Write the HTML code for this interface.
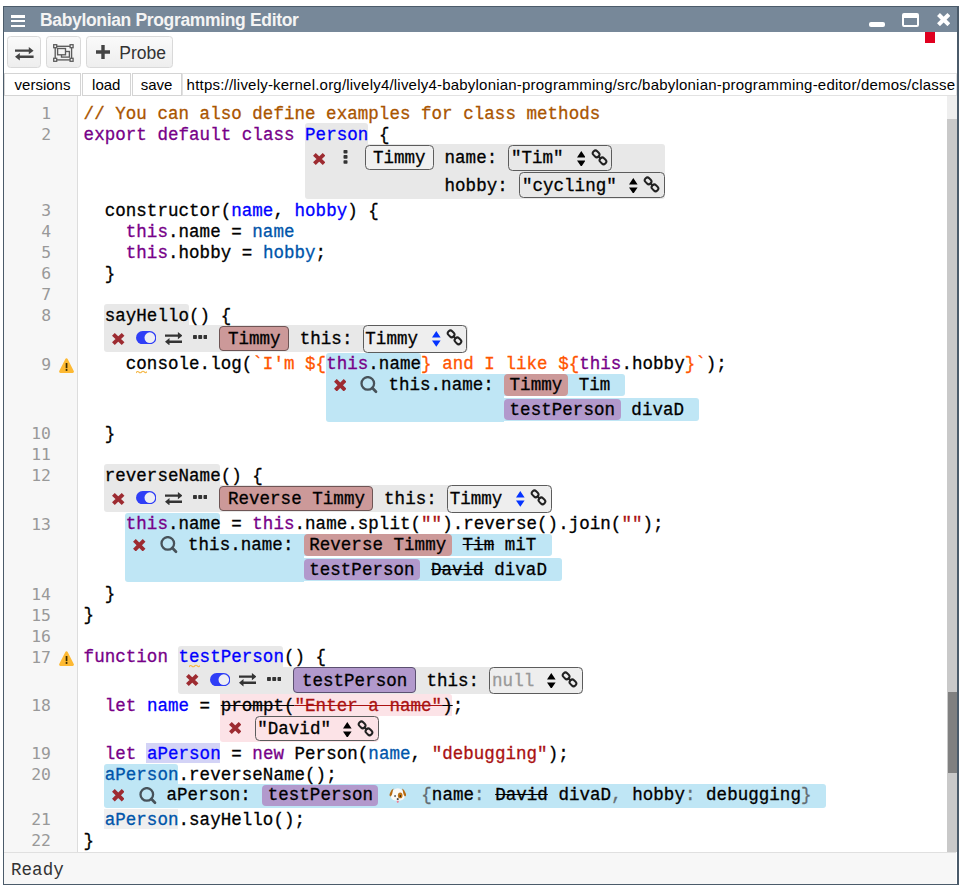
<!DOCTYPE html>
<html lang="en"><head><meta charset="utf-8"><title>Babylonian Programming Editor</title>
<style>
html,body{margin:0;padding:0;background:#fff;}
body{width:965px;height:894px;position:relative;overflow:hidden;font-family:"Liberation Sans",sans-serif;}
div{box-sizing:border-box;}
.m{position:absolute;white-space:pre;font-family:"Liberation Mono",monospace;font-size:17.5px;letter-spacing:0.043px;line-height:21px;height:21px;color:#000;-webkit-text-stroke:0.3px;}
.ln{position:absolute;left:4px;width:47px;text-align:right;white-space:pre;font-family:"DejaVu Sans Mono","Liberation Mono",monospace;font-size:16.4px;line-height:21px;height:21px;color:#999;}
.k{color:#708}.d{color:#00f}.v2{color:#05a}.s{color:#a11}.s2{color:#f50}.c{color:#a50}.g{color:#626c72}
.st{text-decoration:underline;text-decoration-thickness:1.2px;text-underline-offset:-5.6px;text-decoration-skip-ink:none;}
.btn{position:absolute;background:linear-gradient(#fafafa,#eee);border:1px solid #d9d9d9;border-radius:3.5px;}
.b2{position:absolute;top:73px;height:23px;background:#fff;border:1px solid #d4d4d4;font-size:15px;line-height:21px;text-align:center;color:#000;}
.chip{position:absolute;border-radius:4px;}
.ibox{position:absolute;border:1px solid #5c5c5c;border-radius:4.5px;}
</style></head><body>

<div style="position:absolute;left:3.00px;top:6.00px;width:956.00px;height:879.00px;background:#fff;border:1px solid #4b5b6a;border-right-width:2px;"></div>
<div style="position:absolute;left:4.00px;top:7.00px;width:953.00px;height:25.00px;background:#778899;"></div>
<div style="position:absolute;left:10.80px;top:15.20px;width:14.40px;height:2.40px;background:#fff;"></div>
<div style="position:absolute;left:10.80px;top:19.90px;width:14.40px;height:2.40px;background:#fff;"></div>
<div style="position:absolute;left:10.80px;top:24.60px;width:14.40px;height:2.40px;background:#fff;"></div>
<div style="position:absolute;left:40px;top:9.5px;font:bold 17.5px/21px 'Liberation Sans',sans-serif;color:#f4f4f4;white-space:pre;letter-spacing:-0.34px;">Babylonian Programming Editor</div>
<div style="position:absolute;left:868.60px;top:21.80px;width:16.80px;height:5.20px;background:#fff;border-radius:2px;"></div>
<div style="position:absolute;left:901.60px;top:12.80px;width:17.00px;height:14.30px;border:2.3px solid #fff;border-top-width:5.2px;border-radius:2px;"></div>
<svg style="position:absolute;left:936.80px;top:13.30px" width="13.4" height="13.2" viewBox="0 0 12 12" preserveAspectRatio="none"><path d="M1.35 1.35L10.65 10.65M10.65 1.35L1.35 10.65" stroke="#fff" stroke-width="3.7" fill="none"/></svg>
<div style="position:absolute;left:924.70px;top:32.00px;width:10.20px;height:10.80px;background:#e0001f;"></div>
<div class="btn" style="left:7.3px;top:35.6px;width:33.4px;height:32.8px;"></div>
<svg style="position:absolute;left:15.00px;top:47.40px" width="18.6" height="13.4" viewBox="0 0 17.4 13.4" preserveAspectRatio="none"><path d="M0 2.45H12.9V0L17.4 3.65L12.9 7.3V4.85H0ZM17.4 8.55H4.5V6.1L0 9.75L4.5 13.4V10.95H17.4Z" fill="#444"/></svg>
<div class="btn" style="left:46.3px;top:35.6px;width:34.4px;height:32.8px;"></div>
<svg style="position:absolute;left:53.20px;top:44.20px" width="20.8" height="18" viewBox="0 0 20.8 18"><g fill="none" stroke="#5c5c5c" stroke-width="1.35"><rect x="2.2" y="2.3" width="16.4" height="13.6"/><rect x="8.5" y="7.5" width="7.9" height="5.6"/><rect x="4.6" y="4.5" width="7.9" height="6.3" fill="#f4f4f4"/></g><g fill="#f6f6f6" stroke="#5c5c5c" stroke-width="1.3"><rect x=".7" y=".7" width="3" height="3"/><rect x="17.1" y=".7" width="3" height="3"/><rect x=".7" y="14.3" width="3" height="3"/><rect x="17.1" y="14.3" width="3" height="3"/></g></svg>
<div class="btn" style="left:86.2px;top:35.6px;width:86.4px;height:32.8px;"></div>
<svg style="position:absolute;left:96.00px;top:45.40px" width="14" height="14" viewBox="0 0 14 14"><path d="M5.3 0H8.7V5.3H14V8.7H8.7V14H5.3V8.7H0V5.3H5.3Z" fill="#444"/></svg>
<div style="position:absolute;left:119.3px;top:42.5px;font:17.5px/21px 'Liberation Sans',sans-serif;color:#333;white-space:pre;">Probe</div>
<div class="b2" style="left:4px;width:77px;">versions</div>
<div class="b2" style="left:81.5px;width:49.5px;">load</div>
<div class="b2" style="left:131.5px;width:50px;">save</div>
<div style="position:absolute;left:182px;top:73px;width:775px;height:23px;border:1px solid #e2e2e2;background:#fff;"><div style="position:absolute;left:0;top:0;width:771.5px;height:21px;overflow:hidden;"><div style="position:absolute;left:3.6px;top:0px;font:15px/21px &quot;Liberation Sans&quot;,sans-serif;color:#000;white-space:pre;letter-spacing:0.21px;">https://lively-kernel.org/lively4/lively4-babylonian-programming/src/babylonian-programming-editor/demos/classes.js</div></div></div>
<div style="position:absolute;left:4.00px;top:96.00px;width:74.00px;height:756.00px;background:#f7f7f7;border-right:1px solid #ddd;"></div>
<div style="position:absolute;left:947.00px;top:96.00px;width:10.00px;height:756.00px;background:#eeeeee;"></div>
<div style="position:absolute;left:947.30px;top:119.30px;width:9.50px;height:732.70px;background:#c9c9c9;"></div>
<div style="position:absolute;left:947.60px;top:692.00px;width:9.20px;height:80.50px;background:#808080;"></div>
<div style="position:absolute;left:4.00px;top:852.00px;width:952.00px;height:32.00px;background:#f7f7f7;border-top:1px solid #e0e0e0;"></div>
<div class="m" style="left:11.00px;top:859.53px;color:#333;-webkit-text-stroke:0;">Ready</div>
<div style="position:absolute;left:304.50px;top:122.70px;width:63.50px;height:22.30px;background:#e8e8e8;border-radius:3px 3px 0 0;"></div>
<div style="position:absolute;left:304.50px;top:143.60px;width:360.80px;height:55.20px;background:#e8e8e8;border-radius:0 3px 3px 3px;"></div>
<svg style="position:absolute;left:312.70px;top:152.60px" width="12.5" height="12" viewBox="0 0 12 12" preserveAspectRatio="none"><path d="M1.35 1.35L10.65 10.65M10.65 1.35L1.35 10.65" stroke="#9d2b31" stroke-width="3.7" fill="none"/></svg>
<svg style="position:absolute;left:342.60px;top:150.00px" width="5" height="13.8" viewBox="0 0 5 13.8"><rect x=".5" y="0" width="4" height="3.6" rx=".8" fill="#333"/><rect x=".5" y="5.1" width="4" height="3.6" rx=".8" fill="#333"/><rect x=".5" y="10.2" width="4" height="3.6" rx=".8" fill="#333"/></svg>
<div class="ibox" style="position:absolute;left:365.00px;top:144.50px;width:69.00px;height:25.20px;background:#f0f0f0;"></div>
<div class="m" style="left:372.90px;top:148.03px;">Timmy</div>
<div class="m" style="left:444.50px;top:148.03px;">name:</div>
<div class="ibox" style="position:absolute;left:508.30px;top:144.60px;width:103.90px;height:26.00px;background:transparent;"></div>
<div class="m" style="left:510.90px;top:148.03px;color:#000;">"Tim"</div>
<svg style="position:absolute;left:576.80px;top:150.50px" width="8.6" height="15.8" viewBox="0 0 8.6 15.8"><path d="M0 6.4L4.3 0L8.6 6.4ZM0 9.4L4.3 15.8L8.6 9.4Z" fill="#000"/></svg>
<svg style="position:absolute;left:590.80px;top:148.60px" width="18.5" height="17.5" viewBox="0 0 18.5 17.5"><g fill="none" stroke="#222" stroke-width="2"><rect x="-3.5" y="-2.6" width="7" height="5.2" rx="2.4" transform="translate(5.1 4.85) rotate(45)"/><rect x="-3.5" y="-2.6" width="7" height="5.2" rx="2.4" transform="translate(11.95 11.85) rotate(45)"/><path d="M6.9 6.7L10.1 9.9" stroke-width="2.1"/></g></svg>
<div class="m" style="left:444.50px;top:175.63px;">hobby:</div>
<div class="ibox" style="position:absolute;left:519.30px;top:171.60px;width:145.50px;height:26.40px;background:transparent;"></div>
<div class="m" style="left:521.90px;top:175.63px;color:#000;">"cycling"</div>
<svg style="position:absolute;left:629.40px;top:177.50px" width="8.6" height="15.8" viewBox="0 0 8.6 15.8"><path d="M0 6.4L4.3 0L8.6 6.4ZM0 9.4L4.3 15.8L8.6 9.4Z" fill="#000"/></svg>
<svg style="position:absolute;left:643.40px;top:175.60px" width="18.5" height="17.5" viewBox="0 0 18.5 17.5"><g fill="none" stroke="#222" stroke-width="2"><rect x="-3.5" y="-2.6" width="7" height="5.2" rx="2.4" transform="translate(5.1 4.85) rotate(45)"/><rect x="-3.5" y="-2.6" width="7" height="5.2" rx="2.4" transform="translate(11.95 11.85) rotate(45)"/><path d="M6.9 6.7L10.1 9.9" stroke-width="2.1"/></g></svg>
<div style="position:absolute;left:104.30px;top:304.20px;width:84.50px;height:21.80px;background:#e8e8e8;border-radius:3px 3px 0 0;"></div>
<div style="position:absolute;left:104.30px;top:325.00px;width:363.64px;height:27.40px;background:#e8e8e8;border-radius:0 4px 4px 3px;"></div>
<svg style="position:absolute;left:112.20px;top:332.90px" width="12.5" height="12" viewBox="0 0 12 12" preserveAspectRatio="none"><path d="M1.35 1.35L10.65 10.65M10.65 1.35L1.35 10.65" stroke="#9d2b31" stroke-width="3.7" fill="none"/></svg>
<svg style="position:absolute;left:135.90px;top:331.00px" width="20.4" height="13.3" viewBox="0 0 20.4 13.3"><rect x="0" y="0" width="20.4" height="13.3" rx="6.65" fill="#2f3ef6"/><circle cx="13.8" cy="6.65" r="5.3" fill="#eeeef4"/></svg>
<svg style="position:absolute;left:165.00px;top:331.75px" width="17.4" height="13.4" viewBox="0 0 17.4 13.4" preserveAspectRatio="none"><path d="M0 2.45H12.9V0L17.4 3.65L12.9 7.3V4.85H0ZM17.4 8.55H4.5V6.1L0 9.75L4.5 13.4V10.95H17.4Z" fill="#333"/></svg>
<svg style="position:absolute;left:192.90px;top:335.20px" width="14.4" height="3.9" viewBox="0 0 14.4 3.9"><rect x="0" y="0" width="3.9" height="3.9" rx=".7" fill="#333"/><rect x="5.25" y="0" width="3.9" height="3.9" rx=".7" fill="#333"/><rect x="10.5" y="0" width="3.9" height="3.9" rx=".7" fill="#333"/></svg>
<div class="chip" style="position:absolute;left:219.40px;top:325.50px;width:69.71px;height:25.90px;background:#cc9999;border:1px solid #6e5555;"></div>
<div class="m" style="left:227.90px;top:329.33px;">Timmy</div>
<div class="m" style="left:299.71px;top:329.33px;">this:</div>
<div class="ibox" style="position:absolute;left:362.73px;top:325.30px;width:104.71px;height:27.50px;background:#eeeeee;"></div>
<div class="m" style="left:365.33px;top:329.33px;color:#000;">Timmy</div>
<svg style="position:absolute;left:432.04px;top:331.20px" width="8.6" height="15.8" viewBox="0 0 8.6 15.8"><path d="M0 6.4L4.3 0L8.6 6.4ZM0 9.4L4.3 15.8L8.6 9.4Z" fill="#0433ff"/></svg>
<svg style="position:absolute;left:446.04px;top:329.30px" width="18.5" height="17.5" viewBox="0 0 18.5 17.5"><g fill="none" stroke="#222" stroke-width="2"><rect x="-3.5" y="-2.6" width="7" height="5.2" rx="2.4" transform="translate(5.1 4.85) rotate(45)"/><rect x="-3.5" y="-2.6" width="7" height="5.2" rx="2.4" transform="translate(11.95 11.85) rotate(45)"/><path d="M6.9 6.7L10.1 9.9" stroke-width="2.1"/></g></svg>
<div style="position:absolute;left:104.30px;top:464.20px;width:115.50px;height:21.80px;background:#e8e8e8;border-radius:3px 3px 0 0;"></div>
<div style="position:absolute;left:104.30px;top:485.00px;width:447.99px;height:27.40px;background:#e8e8e8;border-radius:0 4px 4px 3px;"></div>
<svg style="position:absolute;left:112.20px;top:492.90px" width="12.5" height="12" viewBox="0 0 12 12" preserveAspectRatio="none"><path d="M1.35 1.35L10.65 10.65M10.65 1.35L1.35 10.65" stroke="#9d2b31" stroke-width="3.7" fill="none"/></svg>
<svg style="position:absolute;left:135.90px;top:491.00px" width="20.4" height="13.3" viewBox="0 0 20.4 13.3"><rect x="0" y="0" width="20.4" height="13.3" rx="6.65" fill="#2f3ef6"/><circle cx="13.8" cy="6.65" r="5.3" fill="#eeeef4"/></svg>
<svg style="position:absolute;left:165.00px;top:491.75px" width="17.4" height="13.4" viewBox="0 0 17.4 13.4" preserveAspectRatio="none"><path d="M0 2.45H12.9V0L17.4 3.65L12.9 7.3V4.85H0ZM17.4 8.55H4.5V6.1L0 9.75L4.5 13.4V10.95H17.4Z" fill="#333"/></svg>
<svg style="position:absolute;left:192.90px;top:495.20px" width="14.4" height="3.9" viewBox="0 0 14.4 3.9"><rect x="0" y="0" width="3.9" height="3.9" rx=".7" fill="#333"/><rect x="5.25" y="0" width="3.9" height="3.9" rx=".7" fill="#333"/><rect x="10.5" y="0" width="3.9" height="3.9" rx=".7" fill="#333"/></svg>
<div class="chip" style="position:absolute;left:219.40px;top:485.50px;width:154.06px;height:25.90px;background:#cc9999;border:1px solid #6e5555;"></div>
<div class="m" style="left:227.90px;top:489.33px;">Reverse Timmy</div>
<div class="m" style="left:384.06px;top:489.33px;">this:</div>
<div class="ibox" style="position:absolute;left:447.07px;top:485.30px;width:104.72px;height:27.50px;background:#eeeeee;"></div>
<div class="m" style="left:449.67px;top:489.33px;color:#000;">Timmy</div>
<svg style="position:absolute;left:516.39px;top:491.20px" width="8.6" height="15.8" viewBox="0 0 8.6 15.8"><path d="M0 6.4L4.3 0L8.6 6.4ZM0 9.4L4.3 15.8L8.6 9.4Z" fill="#0433ff"/></svg>
<svg style="position:absolute;left:530.39px;top:489.30px" width="18.5" height="17.5" viewBox="0 0 18.5 17.5"><g fill="none" stroke="#222" stroke-width="2"><rect x="-3.5" y="-2.6" width="7" height="5.2" rx="2.4" transform="translate(5.1 4.85) rotate(45)"/><rect x="-3.5" y="-2.6" width="7" height="5.2" rx="2.4" transform="translate(11.95 11.85) rotate(45)"/><path d="M6.9 6.7L10.1 9.9" stroke-width="2.1"/></g></svg>
<div style="position:absolute;left:178.30px;top:645.70px;width:105.00px;height:21.80px;background:#e8e8e8;border-radius:3px 3px 0 0;"></div>
<div style="position:absolute;left:178.30px;top:666.50px;width:404.82px;height:27.40px;background:#e8e8e8;border-radius:0 4px 4px 3px;"></div>
<svg style="position:absolute;left:186.20px;top:674.40px" width="12.5" height="12" viewBox="0 0 12 12" preserveAspectRatio="none"><path d="M1.35 1.35L10.65 10.65M10.65 1.35L1.35 10.65" stroke="#9d2b31" stroke-width="3.7" fill="none"/></svg>
<svg style="position:absolute;left:209.90px;top:672.50px" width="20.4" height="13.3" viewBox="0 0 20.4 13.3"><rect x="0" y="0" width="20.4" height="13.3" rx="6.65" fill="#2f3ef6"/><circle cx="13.8" cy="6.65" r="5.3" fill="#eeeef4"/></svg>
<svg style="position:absolute;left:239.00px;top:673.25px" width="17.4" height="13.4" viewBox="0 0 17.4 13.4" preserveAspectRatio="none"><path d="M0 2.45H12.9V0L17.4 3.65L12.9 7.3V4.85H0ZM17.4 8.55H4.5V6.1L0 9.75L4.5 13.4V10.95H17.4Z" fill="#333"/></svg>
<svg style="position:absolute;left:266.90px;top:676.70px" width="14.4" height="3.9" viewBox="0 0 14.4 3.9"><rect x="0" y="0" width="3.9" height="3.9" rx=".7" fill="#333"/><rect x="5.25" y="0" width="3.9" height="3.9" rx=".7" fill="#333"/><rect x="10.5" y="0" width="3.9" height="3.9" rx=".7" fill="#333"/></svg>
<div class="chip" style="position:absolute;left:293.40px;top:667.00px;width:122.43px;height:25.90px;background:#b299cc;border:1px solid #5c5070;"></div>
<div class="m" style="left:301.90px;top:670.83px;">testPerson</div>
<div class="m" style="left:426.43px;top:670.83px;">this:</div>
<div class="ibox" style="position:absolute;left:489.44px;top:666.80px;width:93.17px;height:27.50px;background:#eeeeee;"></div>
<div class="m" style="left:492.05px;top:670.83px;color:#999;">null</div>
<svg style="position:absolute;left:547.22px;top:672.70px" width="8.6" height="15.8" viewBox="0 0 8.6 15.8"><path d="M0 6.4L4.3 0L8.6 6.4ZM0 9.4L4.3 15.8L8.6 9.4Z" fill="#000"/></svg>
<svg style="position:absolute;left:561.22px;top:670.80px" width="18.5" height="17.5" viewBox="0 0 18.5 17.5"><g fill="none" stroke="#222" stroke-width="2"><rect x="-3.5" y="-2.6" width="7" height="5.2" rx="2.4" transform="translate(5.1 4.85) rotate(45)"/><rect x="-3.5" y="-2.6" width="7" height="5.2" rx="2.4" transform="translate(11.95 11.85) rotate(45)"/><path d="M6.9 6.7L10.1 9.9" stroke-width="2.1"/></g></svg>
<div style="position:absolute;left:325.80px;top:353.30px;width:94.80px;height:21.20px;background:#bfe6f5;border-radius:3px 3px 0 0;"></div>
<div style="position:absolute;left:325.80px;top:373.50px;width:178.17px;height:48.40px;background:#bfe6f5;border-radius:0 0 0 3px;"></div>
<svg style="position:absolute;left:333.80px;top:378.50px" width="12.5" height="12.5" viewBox="0 0 12 12" preserveAspectRatio="none"><path d="M1.35 1.35L10.65 10.65M10.65 1.35L1.35 10.65" stroke="#9d2b31" stroke-width="3.7" fill="none"/></svg>
<svg style="position:absolute;left:360.40px;top:376.20px" width="18" height="18" viewBox="0 0 18 18"><circle cx="7.8" cy="7.4" r="6.3" fill="none" stroke="#47525a" stroke-width="2.3"/><path d="M12.4 12L16 15.7" stroke="#47525a" stroke-width="2.7" stroke-linecap="round"/></svg>
<div class="m" style="left:388.40px;top:375.33px;">this.name:</div>
<div style="position:absolute;left:503.47px;top:373.80px;width:121.93px;height:22.70px;background:#bfe6f5;border-radius:0 3px 3px 0;"></div>
<div class="chip" style="position:absolute;left:503.97px;top:374.40px;width:64.12px;height:21.50px;background:#cc9999;"></div>
<div class="m" style="left:509.57px;top:375.33px;">Timmy</div>
<div class="m" style="left:578.63px;top:375.33px;">Tim</div>
<div style="position:absolute;left:503.47px;top:398.00px;width:195.73px;height:22.70px;background:#bfe6f5;border-radius:0 3px 3px 0;"></div>
<div class="chip" style="position:absolute;left:503.97px;top:398.60px;width:116.83px;height:21.50px;background:#b299cc;"></div>
<div class="m" style="left:509.57px;top:399.53px;">testPerson</div>
<div class="m" style="left:631.35px;top:399.53px;">divaD</div>
<div style="position:absolute;left:125.40px;top:513.30px;width:94.30px;height:21.20px;background:#bfe6f5;border-radius:3px 3px 0 0;"></div>
<div style="position:absolute;left:125.40px;top:533.50px;width:178.17px;height:48.40px;background:#bfe6f5;border-radius:0 0 0 3px;"></div>
<svg style="position:absolute;left:133.40px;top:538.50px" width="12.5" height="12.5" viewBox="0 0 12 12" preserveAspectRatio="none"><path d="M1.35 1.35L10.65 10.65M10.65 1.35L1.35 10.65" stroke="#9d2b31" stroke-width="3.7" fill="none"/></svg>
<svg style="position:absolute;left:160.00px;top:536.20px" width="18" height="18" viewBox="0 0 18 18"><circle cx="7.8" cy="7.4" r="6.3" fill="none" stroke="#47525a" stroke-width="2.3"/><path d="M12.4 12L16 15.7" stroke="#47525a" stroke-width="2.7" stroke-linecap="round"/></svg>
<div class="m" style="left:188.00px;top:535.33px;">this.name:</div>
<div style="position:absolute;left:303.07px;top:533.80px;width:248.45px;height:22.70px;background:#bfe6f5;border-radius:0 3px 3px 0;"></div>
<div class="chip" style="position:absolute;left:303.57px;top:534.40px;width:148.46px;height:21.50px;background:#cc9999;"></div>
<div class="m" style="left:309.17px;top:535.33px;">Reverse Timmy</div>
<div class="m" style="left:462.57px;top:535.33px;"><span class="st">Tim</span> miT</div>
<div style="position:absolute;left:303.07px;top:558.00px;width:258.99px;height:22.70px;background:#bfe6f5;border-radius:0 3px 3px 0;"></div>
<div class="chip" style="position:absolute;left:303.57px;top:558.60px;width:116.83px;height:21.50px;background:#b299cc;"></div>
<div class="m" style="left:309.17px;top:559.53px;">testPerson</div>
<div class="m" style="left:430.95px;top:559.53px;"><span class="st">David</span> divaD</div>
<div style="position:absolute;left:220.30px;top:694.40px;width:231.60px;height:21.60px;background:#fce3e7;border-radius:0 3px 0 0;"></div>
<div style="position:absolute;left:220.30px;top:715.00px;width:159.10px;height:26.80px;background:#fce3e7;border-radius:0 4px 4px 3px;"></div>
<svg style="position:absolute;left:228.80px;top:722.30px" width="12.5" height="12" viewBox="0 0 12 12" preserveAspectRatio="none"><path d="M1.35 1.35L10.65 10.65M10.65 1.35L1.35 10.65" stroke="#9d2b31" stroke-width="3.7" fill="none"/></svg>
<div class="ibox" style="position:absolute;left:254.60px;top:715.80px;width:124.00px;height:25.70px;background:transparent;"></div>
<div class="m" style="left:257.20px;top:719.43px;color:#000;">"David"</div>
<svg style="position:absolute;left:343.20px;top:721.70px" width="8.6" height="15.8" viewBox="0 0 8.6 15.8"><path d="M0 6.4L4.3 0L8.6 6.4ZM0 9.4L4.3 15.8L8.6 9.4Z" fill="#000"/></svg>
<svg style="position:absolute;left:357.20px;top:719.80px" width="18.5" height="17.5" viewBox="0 0 18.5 17.5"><g fill="none" stroke="#222" stroke-width="2"><rect x="-3.5" y="-2.6" width="7" height="5.2" rx="2.4" transform="translate(5.1 4.85) rotate(45)"/><rect x="-3.5" y="-2.6" width="7" height="5.2" rx="2.4" transform="translate(11.95 11.85) rotate(45)"/><path d="M6.9 6.7L10.1 9.9" stroke-width="2.1"/></g></svg>
<div style="position:absolute;left:146.30px;top:743.20px;width:73.70px;height:20.00px;background:#d3d3f6;border-radius:0;"></div>
<div style="position:absolute;left:103.90px;top:809.40px;width:73.90px;height:20.10px;background:#efefef;border-radius:0;"></div>
<div style="position:absolute;left:103.90px;top:764.00px;width:73.90px;height:21.00px;background:#bfe6f5;border-radius:3px 3px 0 0;"></div>
<div style="position:absolute;left:103.90px;top:784.00px;width:722.40px;height:23.80px;background:#bfe6f5;border-radius:0 3px 3px 3px;"></div>
<svg style="position:absolute;left:111.90px;top:789.00px" width="12.5" height="12.5" viewBox="0 0 12 12" preserveAspectRatio="none"><path d="M1.35 1.35L10.65 10.65M10.65 1.35L1.35 10.65" stroke="#9d2b31" stroke-width="3.7" fill="none"/></svg>
<svg style="position:absolute;left:138.50px;top:786.70px" width="18" height="18" viewBox="0 0 18 18"><circle cx="7.8" cy="7.4" r="6.3" fill="none" stroke="#47525a" stroke-width="2.3"/><path d="M12.4 12L16 15.7" stroke="#47525a" stroke-width="2.7" stroke-linecap="round"/></svg>
<div class="m" style="left:166.50px;top:785.43px;">aPerson:</div>
<div class="chip" style="position:absolute;left:262.40px;top:784.80px;width:115.40px;height:21.40px;background:#b299cc;"></div>
<div class="m" style="left:267.70px;top:785.43px;">testPerson</div>
<svg style="position:absolute;left:389.30px;top:787.80px" width="17.6" height="15.2" viewBox="0 0 17.6 15.2"><ellipse cx="8.75" cy="13.6" rx="1" ry="1.4" fill="#ee7f95"/><path d="M4.2 2.2Q8.75 -1.6 13.3 2.2Q16.4 6.5 15.3 10Q13.4 12.9 8.75 12.6Q4.1 12.9 2.2 10Q1.1 6.5 4.2 2.2Z" fill="#fbf9f6"/><path d="M4.6 .5Q2.4 1.3 .9 5.2Q-.1 8 1.6 8.4Q3 7.6 3.4 5Q3.7 2.6 4.6 .5Z" fill="#b9690f"/><path d="M13 .5Q15.2 1.3 16.7 5.2Q17.7 8 16 8.4Q14.6 7.6 14.2 5Q13.9 2.6 13 .5Z" fill="#b9690f"/><ellipse cx="11.2" cy="7.4" rx="2.3" ry="2.9" fill="#bf7215"/><ellipse cx="6.05" cy="8.1" rx=".65" ry="1.05" fill="#1a1a1a"/><ellipse cx="11.3" cy="8.1" rx=".65" ry="1.05" fill="#1a1a1a"/><ellipse cx="8.75" cy="11" rx="1.05" ry=".85" fill="#111"/></svg>
<div class="m" style="left:421.30px;top:785.43px;"><span class="g">{</span>name<span class="g">:</span> <span class="st">David</span> divaD<span class="g">,</span> hobby<span class="g">:</span> debugging<span class="g">}</span></div>
<svg style="position:absolute;left:135.50px;top:370.30px" width="11" height="4" viewBox="0 0 11 4"><path d="M0 3Q1.4 .5 2.8 2T5.6 2T8.4 2T11 1.5" fill="none" stroke="#f5b94a" stroke-width="1.1"/></svg>
<svg style="position:absolute;left:188.50px;top:663.60px" width="11" height="4" viewBox="0 0 11 4"><path d="M0 3Q1.4 .5 2.8 2T5.6 2T8.4 2T11 1.5" fill="none" stroke="#f5b94a" stroke-width="1.1"/></svg>
<div class="ln" style="top:103.20px;">1</div>
<div class="m" style="left:83.60px;top:103.63px;"><span class="c">// You can also define examples for class methods</span></div>
<div class="ln" style="top:124.20px;">2</div>
<div class="m" style="left:83.60px;top:124.63px;"><span class="k">export</span> <span class="k">default</span> <span class="k">class</span> <span class="d">Person</span> {</div>
<div class="ln" style="top:200.20px;">3</div>
<div class="m" style="left:83.60px;top:200.63px;">  constructor(<span class="d">name</span>, <span class="d">hobby</span>) {</div>
<div class="ln" style="top:221.20px;">4</div>
<div class="m" style="left:83.60px;top:221.63px;">    <span class="k">this</span>.name = <span class="v2">name</span></div>
<div class="ln" style="top:242.20px;">5</div>
<div class="m" style="left:83.60px;top:242.63px;">    <span class="k">this</span>.hobby = <span class="v2">hobby</span>;</div>
<div class="ln" style="top:263.20px;">6</div>
<div class="m" style="left:83.60px;top:263.63px;">  }</div>
<div class="ln" style="top:284.20px;">7</div>
<div class="ln" style="top:305.20px;">8</div>
<div class="m" style="left:83.60px;top:305.63px;">  sayHello() {</div>
<div class="ln" style="top:353.70px;">9</div>
<div class="m" style="left:83.60px;top:354.13px;">    console.log(<span class="s2">`I'm ${</span><span class="k">this</span>.name<span class="s2">} and I like ${</span><span class="k">this</span>.hobby<span class="s2">}`</span>);</div>
<div class="ln" style="top:423.20px;">10</div>
<div class="m" style="left:83.60px;top:423.63px;">  }</div>
<div class="ln" style="top:444.20px;">11</div>
<div class="ln" style="top:465.20px;">12</div>
<div class="m" style="left:83.60px;top:465.63px;">  reverseName() {</div>
<div class="ln" style="top:513.70px;">13</div>
<div class="m" style="left:83.60px;top:514.13px;">    <span class="k">this</span>.name = <span class="k">this</span>.name.split(<span class="s">""</span>).reverse().join(<span class="s">""</span>);</div>
<div class="ln" style="top:583.70px;">14</div>
<div class="m" style="left:83.60px;top:584.13px;">  }</div>
<div class="ln" style="top:604.70px;">15</div>
<div class="m" style="left:83.60px;top:605.13px;">}</div>
<div class="ln" style="top:625.70px;">16</div>
<div class="ln" style="top:646.70px;">17</div>
<div class="m" style="left:83.60px;top:647.13px;"><span class="k">function</span> <span class="d">testPerson</span>() {</div>
<div class="ln" style="top:695.20px;">18</div>
<div class="m" style="left:83.60px;top:695.63px;">  <span class="k">let</span> <span class="d">name</span> = <span class="st">prompt(</span><span class="s st">"Enter a name"</span><span class="st">)</span>;</div>
<div class="ln" style="top:743.20px;">19</div>
<div class="m" style="left:83.60px;top:743.63px;">  <span class="k">let</span> <span class="d">aPerson</span> = <span class="k">new</span> Person(<span class="v2">name</span>, <span class="s">"debugging"</span>);</div>
<div class="ln" style="top:764.20px;">20</div>
<div class="m" style="left:83.60px;top:764.63px;">  <span class="v2">aPerson</span>.reverseName();</div>
<div class="ln" style="top:809.20px;">21</div>
<div class="m" style="left:83.60px;top:809.63px;">  <span class="v2">aPerson</span>.sayHello();</div>
<div class="ln" style="top:830.20px;">22</div>
<div class="m" style="left:83.60px;top:830.63px;">}</div>
<svg style="position:absolute;left:59.40px;top:357.80px" width="15" height="15.5" viewBox="0 0 15 15.5"><path d="M7.5 1.6L13.6 13.6H1.4Z" fill="#fdb933" stroke="#fdb933" stroke-width="2.6" stroke-linejoin="round"/><rect x="6.7" y="5" width="1.7" height="5.2" fill="#3a2a00"/><rect x="6.7" y="11" width="1.7" height="1.9" fill="#3a2a00"/></svg>
<svg style="position:absolute;left:59.40px;top:650.70px" width="15" height="15.5" viewBox="0 0 15 15.5"><path d="M7.5 1.6L13.6 13.6H1.4Z" fill="#fdb933" stroke="#fdb933" stroke-width="2.6" stroke-linejoin="round"/><rect x="6.7" y="5" width="1.7" height="5.2" fill="#3a2a00"/><rect x="6.7" y="11" width="1.7" height="1.9" fill="#3a2a00"/></svg>
</body></html>
